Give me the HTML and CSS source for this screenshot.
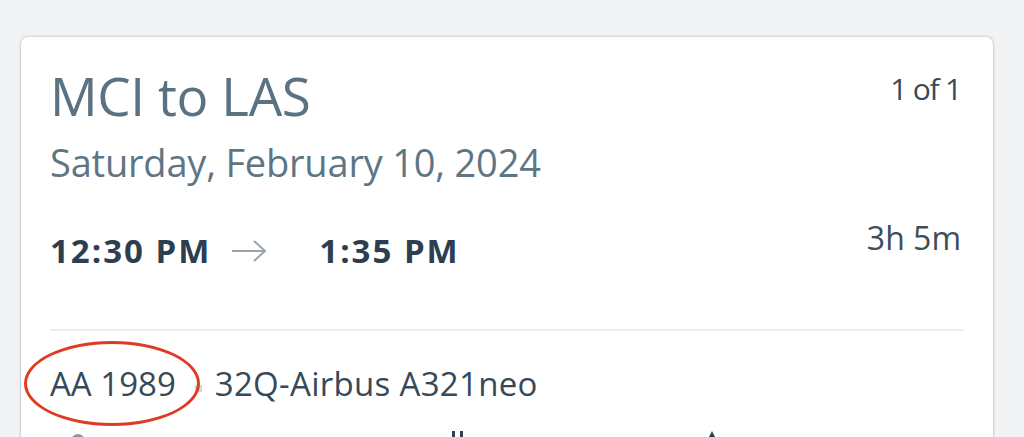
FILE: index.html
```html
<!DOCTYPE html>
<html>
<head>
<meta charset="utf-8">
<link rel="stylesheet" href="styles.css">
</head>
<body>
<div class="card">
  <div class="head">
    <h1 class="route">MCI to LAS</h1>
    <span class="count">1 of 1</span>
  </div>
  <div class="date">Saturday, February 10, 2024</div>
  <div class="times">
    <div class="legs">
      <span class="time">12:30 PM</span>
      <svg class="arrow" width="36" height="24" viewBox="0 0 36 24"><path d="M1 12H34M23 2L34 12L23 22" fill="none" stroke="#9aa3aa" stroke-width="2"/></svg>
      <span class="time">1:35 PM</span>
    </div>
    <span class="duration">3h 5m</span>
  </div>
  <div class="divider"></div>
  <div class="flight">
    <span class="flightno">AA 1989<span class="circle"></span></span>
    <span class="dot"></span>
    <span class="aircraft">32Q-Airbus A321neo</span>
  </div>
  <div class="icons">
    <span class="ic ic1"></span>
    <span class="ic ic2"><i></i><i></i></span>
    <span class="ic ic3"></span>
  </div>
</div>
</body>
</html>
```
FILE: styles.css
```css
html, body { margin: 0; padding: 0; }
body {
  background: #f2f3f5;
  font-family: "Open Sans", "Noto Sans", sans-serif;
  padding: 37px 0 0 21px;
  height: 437px;
  box-sizing: border-box;
  overflow: hidden;
}
.card {
  width: 972px;
  box-sizing: border-box;
  background: #fff;
  border-radius: 7px;
  box-shadow: 0 0 3px rgba(0,0,0,0.28), 0 1px 2px rgba(0,0,0,0.12);
  padding: 32px 29px 20px 29px;
}
.head {
  display: flex;
  justify-content: space-between;
  align-items: flex-start;
}
.route {
  margin: 0;
  font-weight: 400;
  font-size: 53px;
  line-height: 54px;
  color: #5a7282;
  letter-spacing: -0.4px;
}
.count {
  font-size: 30px;
  line-height: 30px;
  color: #3a4956;
  margin: 5px 3px 0 0;
  letter-spacing: -1.2px;
}
.date {
  margin-top: 19px;
  font-size: 38px;
  line-height: 40px;
  color: #5e7584;
  letter-spacing: -0.2px;
}
.times {
  margin-top: 52px;
  display: flex;
  justify-content: space-between;
  align-items: flex-start;
}
.legs {
  display: flex;
  align-items: center;
}
.time {
  font-size: 33px;
  line-height: 34px;
  font-weight: 700;
  color: #2c3e50;
  letter-spacing: 2px;
}
.arrow { margin: 0 52px 0 20px; }
.duration {
  font-size: 32px;
  line-height: 32px;
  color: #3f4d59;
  margin: -12px 3px 0 0;
}
.divider {
  margin-top: 61px;
  height: 2px;
  background: #eceef0;
}
.flight {
  margin-top: 36px;
  display: flex;
  align-items: center;
  font-size: 33px;
  line-height: 34px;
  color: #36495a;
}
.flightno { position: relative; }
.circle {
  position: absolute;
  left: -26px;
  top: -26px;
  width: 170px;
  height: 79px;
  border: 3px solid #e03a22;
  border-radius: 50%;
}
.dot {
  width: 7px;
  height: 7px;
  background: #d4d7da;
  margin: 8px 13px 0 19px;
}
.aircraft { letter-spacing: 0.3px; }
.icons {
  margin-top: 30px;
  position: relative;
  height: 20px;
}
.ic { position: absolute; top: 0; }
.ic1 {
  left: 20px; top: 3px;
  width: 16px; height: 16px;
  border-radius: 50%;
  border-top: 3px solid #8b949b;
}
.ic2 { left: 402px; display: flex; gap: 5px; }
.ic2 i { width: 3px; height: 10px; background: #2c3e50; display: block; }
.ic3 {
  left: 657px;
  width: 0; height: 0;
  border-left: 5px solid transparent;
  border-right: 5px solid transparent;
  border-bottom: 10px solid #2c3e50;
}
```
